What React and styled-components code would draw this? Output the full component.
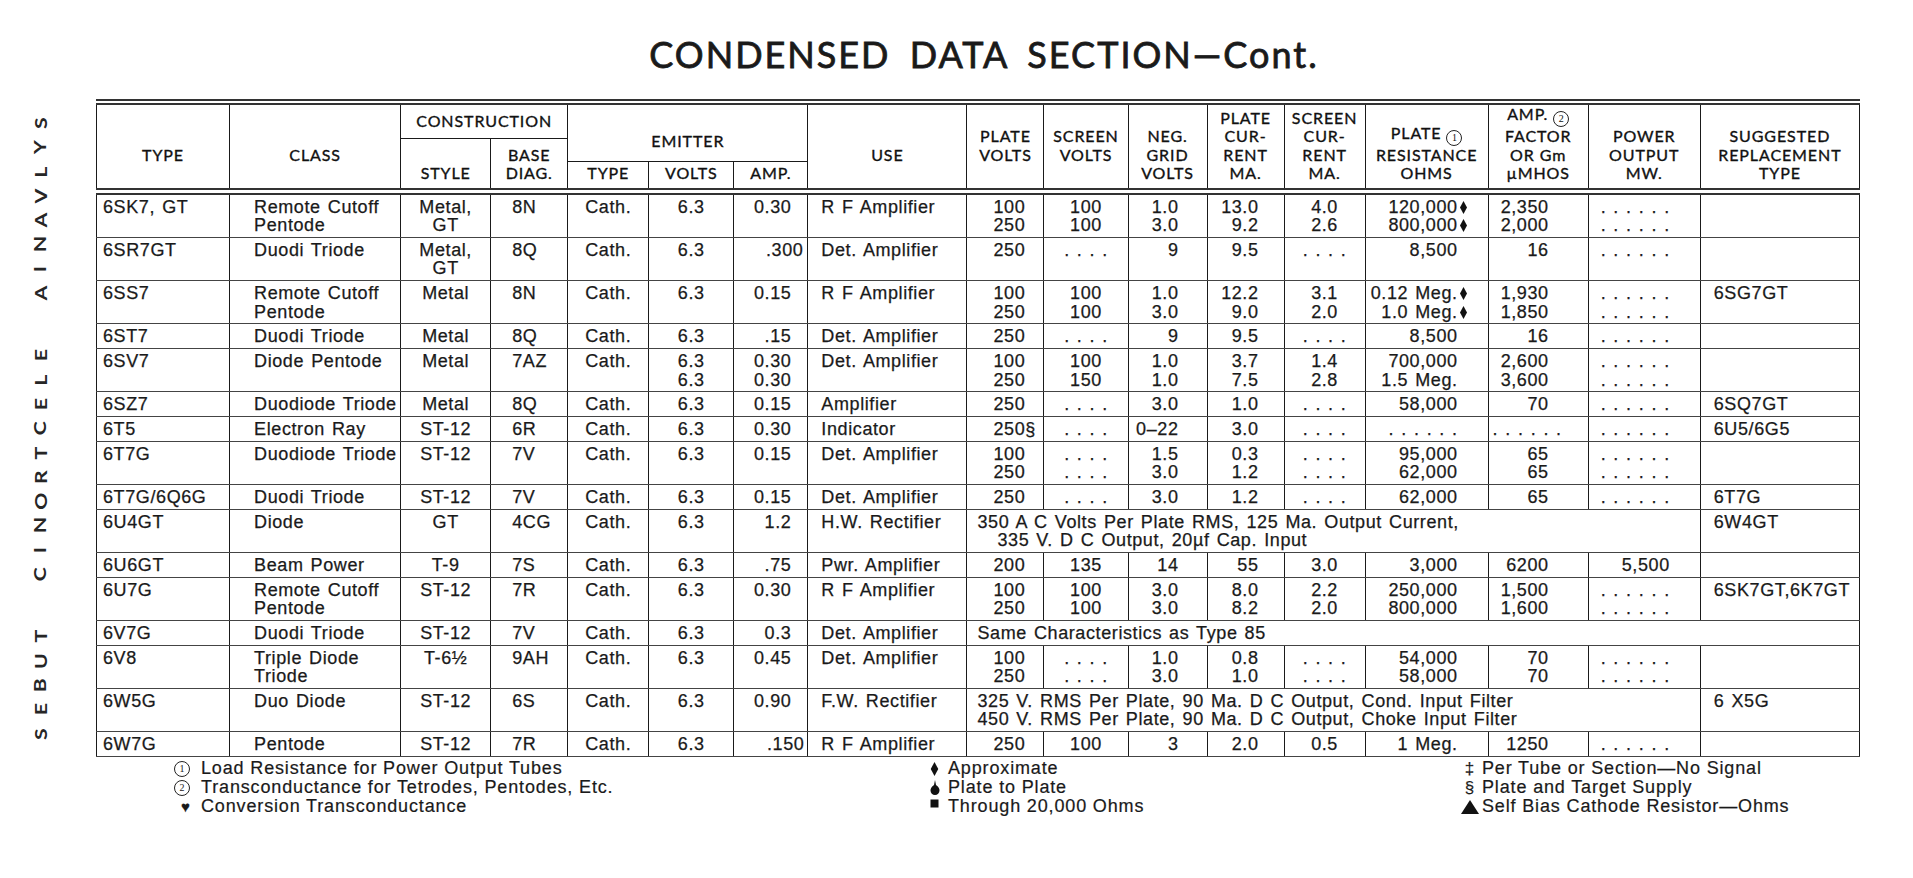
import React from "react";
import styled, { createGlobalStyle } from "styled-components";

const GlobalStyle = createGlobalStyle`
  html, body {
    margin: 0;
    padding: 0;
    background: #fff;
  }
  body {
    width: 1913px;
    height: 878px;
    overflow: hidden;
    color: #1a1a1a;
  }
`;

const INK = "#1a1a1a";
const D6 = ". . . . . .";
const D4 = ". . . .";

const COLS = [
  { w: 133, align: "left", pl: 6 },
  { w: 171, align: "left", pl: 24 },
  { w: 90, align: "center" },
  { w: 77, align: "left", pl: 21 },
  { w: 81, align: "center" },
  { w: 85, align: "center" },
  { w: 74, align: "right", pr: 16 },
  { w: 159, align: "left", pl: 13 },
  { w: 77, align: "left", pl: 26 },
  { w: 84, align: "center" },
  { w: 79, align: "right", pr: 28 },
  { w: 77, align: "right", pr: 25 },
  { w: 81, align: "center" },
  { w: 123, align: "right", pr: 30 },
  { w: 100, align: "right", pr: 39 },
  { w: 112, align: "right", pr: 30 },
  { w: 159, align: "left", pl: 13 },
];

// { text, pr } overrides the column's right padding for one cell
const ROWS = [
  ["6SK7, GT", "Remote Cutoff\nPentode", "Metal,\nGT", "8N", "Cath.", "6.3", "0.30", "R F Amplifier", "100\n250", "100\n100", "1.0\n3.0", "13.0\n9.2", "4.0\n2.6", "120,000♦\n800,000♦", "2,350\n2,000", `${D6}\n${D6}`, ""],
  ["6SR7GT", "Duodi Triode", "Metal,\nGT", "8Q", "Cath.", "6.3", { text: ".300", pr: 4 }, "Det. Amplifier", "250", D4, "9", "9.5", D4, "8,500", "16", D6, ""],
  ["6SS7", "Remote Cutoff\nPentode", "Metal", "8N", "Cath.", "6.3", "0.15", "R F Amplifier", "100\n250", "100\n100", "1.0\n3.0", "12.2\n9.0", "3.1\n2.0", "0.12 Meg.♦\n1.0 Meg.♦", "1,930\n1,850", `${D6}\n${D6}`, "6SG7GT"],
  ["6ST7", "Duodi Triode", "Metal", "8Q", "Cath.", "6.3", ".15", "Det. Amplifier", "250", D4, "9", "9.5", D4, "8,500", "16", D6, ""],
  ["6SV7", "Diode Pentode", "Metal", "7AZ", "Cath.", "6.3\n6.3", "0.30\n0.30", "Det. Amplifier", "100\n250", "100\n150", "1.0\n1.0", "3.7\n7.5", "1.4\n2.8", "700,000\n1.5 Meg.", "2,600\n3,600", `${D6}\n${D6}`, ""],
  ["6SZ7", "Duodiode Triode", "Metal", "8Q", "Cath.", "6.3", "0.15", "Amplifier", "250", D4, "3.0", "1.0", D4, "58,000", "70", D6, "6SQ7GT"],
  ["6T5", "Electron Ray", "ST-12", "6R", "Cath.", "6.3", "0.30", "Indicator", "250§", D4, "0–22", "3.0", D4, D6, { text: D6, pr: 26 }, D6, "6U5/6G5"],
  ["6T7G", "Duodiode Triode", "ST-12", "7V", "Cath.", "6.3", "0.15", "Det. Amplifier", "100\n250", `${D4}\n${D4}`, "1.5\n3.0", "0.3\n1.2", `${D4}\n${D4}`, "95,000\n62,000", "65\n65", `${D6}\n${D6}`, ""],
  ["6T7G/6Q6G", "Duodi Triode", "ST-12", "7V", "Cath.", "6.3", "0.15", "Det. Amplifier", "250", D4, "3.0", "1.2", D4, "62,000", "65", D6, "6T7G"],
  ["6U4GT", "Diode", "GT", "4CG", "Cath.", "6.3", "1.2", "H.W. Rectifier", { span: 8, lines: ["350 A C Volts Per Plate RMS, 125 Ma. Output Current,", "335 V. D C Output, 20µf Cap. Input"], indent: 20 }, "6W4GT"],
  ["6U6GT", "Beam Power", "T-9", "7S", "Cath.", "6.3", ".75", "Pwr. Amplifier", "200", "135", "14", "55", "3.0", "3,000", "6200", "5,500", ""],
  ["6U7G", "Remote Cutoff\nPentode", "ST-12", "7R", "Cath.", "6.3", "0.30", "R F Amplifier", "100\n250", "100\n100", "3.0\n3.0", "8.0\n8.2", "2.2\n2.0", "250,000\n800,000", "1,500\n1,600", `${D6}\n${D6}`, "6SK7GT,6K7GT"],
  ["6V7G", "Duodi Triode", "ST-12", "7V", "Cath.", "6.3", "0.3", "Det. Amplifier", { span: 9, lines: ["Same Characteristics as Type 85"] }],
  ["6V8", "Triple Diode\nTriode", "T-6½", "9AH", "Cath.", "6.3", "0.45", "Det. Amplifier", "100\n250", `${D4}\n${D4}`, "1.0\n3.0", "0.8\n1.0", `${D4}\n${D4}`, "54,000\n58,000", "70\n70", `${D6}\n${D6}`, ""],
  ["6W5G", "Duo Diode", "ST-12", "6S", "Cath.", "6.3", "0.90", "F.W. Rectifier", { span: 8, lines: ["325 V. RMS Per Plate, 90 Ma. D C Output, Cond. Input Filter", "450 V. RMS Per Plate, 90 Ma. D C Output, Choke Input Filter"] }, "6 X5G"],
  ["6W7G", "Pentode", "ST-12", "7R", "Cath.", "6.3", { text: ".150", pr: 3 }, "R F Amplifier", "250", "100", "3", "2.0", "0.5", "1 Meg.", "1250", D6, ""],
];

const BANNER = ["SYLVANIA", "ELECTRONIC", "TUBES"];

const Page = styled.div`
  display: flex;
  align-items: flex-start;
  width: 1913px;
  height: 878px;
`;

const Banner = styled.div`
  box-sizing: border-box;
  width: 96px;
  padding: 111px 14px 0 0;
  display: flex;
  flex-direction: column;
  align-items: center;
`;

const Word = styled.div`
  display: flex;
  flex-direction: column;
  align-items: center;
  & + & {
    margin-top: 38px;
  }
`;

const Letter = styled.span`
  display: block;
  height: 24.3px;
  line-height: 24.3px;
  font-family: Lato, "DejaVu Sans", sans-serif;
  font-weight: 700;
  font-size: 17px;
  color: #262626;
  transform: rotate(-90deg) scaleX(1.25);
`;

const Main = styled.div`
  display: flex;
  flex-direction: column;
`;

const Title = styled.h1`
  margin: 0;
  padding: 33px 0 24px 12px;
  text-align: center;
  font-family: Lato, "DejaVu Sans", sans-serif;
  font-weight: 400;
  font-size: 36px;
  line-height: 42px;
  letter-spacing: 2px;
  word-spacing: 8px;
  color: ${INK};
  -webkit-text-stroke: 0.8px ${INK};
`;

const Table = styled.table`
  border-collapse: collapse;
  table-layout: fixed;
  width: 1764px;
  border: 1px solid ${INK};
  border-top: 6px double #333;

  tbody tr:first-child td {
    border-top: 7px double #333;
  }
`;

const HeadRow = styled.tr`
  height: ${(p) => p.$h}px;
`;

const Th = styled.th`
  padding: 0 0 ${(p) => (p.$lift ? 23.5 : p.$pb ?? 5)}px;
  border: 1px solid ${INK};
  vertical-align: ${(p) => p.$valign || "bottom"};
  text-align: center;
  white-space: pre;
  font-family: Lato, "DejaVu Sans", sans-serif;
  font-weight: 400;
  font-size: 16px;
  line-height: 18.5px;
  letter-spacing: 0.9px;
  color: #111;
  -webkit-text-stroke: 0.35px #111;
`;

const Td = styled.td`
  padding: 3px ${(p) => p.$pr || 0}px 2px ${(p) => p.$pl || 0}px;
  border-left: 1px solid ${INK};
  border-right: 1px solid ${INK};
  border-bottom: 1px solid #444;
  vertical-align: top;
  text-align: ${(p) => p.$align};
  white-space: pre;
  font-family: "Liberation Sans", Arial, sans-serif;
  font-size: 18px;
  line-height: 18.5px;
  letter-spacing: 0.6px;
  word-spacing: 1.5px;
  color: ${INK};
  -webkit-text-stroke: 0.25px ${INK};
`;

const Line = styled.span`
  display: block;
  padding-left: ${(p) => p.$indent || 0}px;
`;

const LozengeSvg = styled.svg`
  width: 7px;
  height: 13px;
  margin: 0 -9px 0 2px;
  vertical-align: -1px;
`;

const Circled = styled.span`
  display: inline-flex;
  align-items: center;
  justify-content: center;
  box-sizing: border-box;
  width: 16px;
  height: 16px;
  border: 1px solid #222;
  border-radius: 50%;
  font-family: "Liberation Serif", serif;
  font-size: 10px;
  line-height: 1;
  letter-spacing: 0;
  vertical-align: -2px;
  -webkit-text-stroke: 0;
`;

const Footnotes = styled.div`
  display: grid;
  grid-template-columns: 756px 528px 1fr;
  padding-left: 78px;
  margin-top: 6px;
  font-family: "Liberation Sans", Arial, sans-serif;
  font-size: 18px;
  line-height: 19px;
  letter-spacing: 0.85px;
  color: ${INK};
  -webkit-text-stroke: 0.2px ${INK};
`;

const NoteCol = styled.div`
  display: flex;
  flex-direction: column;
`;

const Note = styled.div`
  display: flex;
  align-items: center;
  height: 19px;
`;

const Mark = styled.span`
  flex: none;
  display: flex;
  align-items: center;
  justify-content: ${(p) => p.$justify || "center"};
  width: ${(p) => p.$w}px;
  padding-left: ${(p) => p.$pl || 0}px;
  box-sizing: border-box;
  font-size: ${(p) => p.$fs || 17}px;
`;

function Lozenge() {
  return (
    <LozengeSvg viewBox="0 0 7 13">
      <polygon points="3.5,0 7,6.5 3.5,13 0,6.5" fill="#111" />
    </LozengeSvg>
  );
}

function Drop() {
  return (
    <svg width="10" height="15" viewBox="0 0 10 15">
      <path d="M5 0 L6 5 C9 7 9.5 9 9.5 10.5 C9.5 13 7.5 15 5 15 C2.5 15 0.5 13 0.5 10.5 C0.5 9 1 7 4 5 Z" fill="#111" />
    </svg>
  );
}

function Square() {
  return (
    <svg width="9" height="9" viewBox="0 0 9 9" style={{ marginTop: -6 }}>
      <rect x="0.5" y="0.5" width="8" height="8" fill="#111" />
    </svg>
  );
}

function Triangle() {
  return (
    <svg width="18" height="14" viewBox="0 0 18 14">
      <polygon points="9,0 18,14 0,14" fill="#111" />
    </svg>
  );
}

function withLozenges(text) {
  const parts = text.split("♦");
  return parts.map((part, i) => (
    <React.Fragment key={i}>
      {part}
      {i < parts.length - 1 && <Lozenge />}
    </React.Fragment>
  ));
}

function BodyRow({ row }) {
  let col = 0;
  return (
    <tr>
      {row.map((cell, i) => {
        const c = COLS[col];
        if (cell && cell.span) {
          col += cell.span;
          return (
            <Td key={i} colSpan={cell.span} $align="left" $pl={10}>
              {cell.lines.map((l, j) => (
                <Line key={j} $indent={j > 0 ? cell.indent : 0}>
                  {l}
                </Line>
              ))}
            </Td>
          );
        }
        col += 1;
        if (cell && cell.text) {
          return (
            <Td key={i} $align={c.align} $pl={c.pl} $pr={cell.pr}>
              {cell.text}
            </Td>
          );
        }
        return (
          <Td key={i} $align={c.align} $pl={c.pl} $pr={c.pr}>
            {withLozenges(cell)}
          </Td>
        );
      })}
    </tr>
  );
}

export default function App() {
  return (
    <>
      <GlobalStyle />
      <Page>
        <Banner>
          {BANNER.map((w) => (
            <Word key={w}>
              {w.split("").map((ch, i) => (
                <Letter key={i}>{ch}</Letter>
              ))}
            </Word>
          ))}
        </Banner>

        <Main>
          <Title>CONDENSED DATA SECTION—Cont.</Title>

          <Table>
            <colgroup>
              {COLS.map((c, i) => (
                <col key={i} style={{ width: c.w }} />
              ))}
            </colgroup>
            <thead>
              <HeadRow $h={36}>
                <Th rowSpan={3} $lift>TYPE</Th>
                <Th rowSpan={3} $lift>CLASS</Th>
                <Th colSpan={2} $valign="middle" $pb={0}>CONSTRUCTION</Th>
                <Th colSpan={3} rowSpan={2} $pb={10}>EMITTER</Th>
                <Th rowSpan={3} $lift>USE</Th>
                <Th rowSpan={3} $lift>{"PLATE\nVOLTS"}</Th>
                <Th rowSpan={3} $lift>{"SCREEN\nVOLTS"}</Th>
                <Th rowSpan={3}>{"NEG.\nGRID\nVOLTS"}</Th>
                <Th rowSpan={3}>{"PLATE\nCUR-\nRENT\nMA."}</Th>
                <Th rowSpan={3}>{"SCREEN\nCUR-\nRENT\nMA."}</Th>
                <Th rowSpan={3}>
                  PLATE <Circled>1</Circled>
                  {"\nRESISTANCE\nOHMS"}
                </Th>
                <Th rowSpan={3}>
                  AMP. <Circled>2</Circled>
                  {"\nFACTOR\nOR Gm\nµMHOS"}
                </Th>
                <Th rowSpan={3}>{"POWER\nOUTPUT\nMW."}</Th>
                <Th rowSpan={3}>{"SUGGESTED\nREPLACEMENT\nTYPE"}</Th>
              </HeadRow>
              <HeadRow $h={19}>
                <Th rowSpan={2}>STYLE</Th>
                <Th rowSpan={2}>{"BASE\nDIAG."}</Th>
              </HeadRow>
              <HeadRow $h={30}>
                <Th>TYPE</Th>
                <Th>VOLTS</Th>
                <Th>AMP.</Th>
              </HeadRow>
            </thead>
            <tbody>
              {ROWS.map((row) => (
                <BodyRow key={row[0]} row={row} />
              ))}
            </tbody>
          </Table>

          <Footnotes>
            <NoteCol>
              <Note>
                <Mark $w={27} $justify="flex-start"><Circled>1</Circled></Mark>
                Load Resistance for Power Output Tubes
              </Note>
              <Note>
                <Mark $w={27} $justify="flex-start"><Circled>2</Circled></Mark>
                Transconductance for Tetrodes, Pentodes, Etc.
              </Note>
              <Note>
                <Mark $w={27} $justify="flex-start" $pl={7} $fs={15}>♥</Mark>
                Conversion Transconductance
              </Note>
            </NoteCol>
            <NoteCol>
              <Note>
                <Mark $w={18} $justify="flex-start">
                  <svg width="9" height="14" viewBox="0 0 7 13">
                    <polygon points="3.5,0 7,6.5 3.5,13 0,6.5" fill="#111" />
                  </svg>
                </Mark>
                Approximate
              </Note>
              <Note>
                <Mark $w={18} $justify="flex-start"><Drop /></Mark>
                Plate to Plate
              </Note>
              <Note>
                <Mark $w={18} $justify="flex-start"><Square /></Mark>
                Through 20,000 Ohms
              </Note>
            </NoteCol>
            <NoteCol>
              <Note>
                <Mark $w={24}>‡</Mark>
                Per Tube or Section—No Signal
              </Note>
              <Note>
                <Mark $w={24}>§</Mark>
                Plate and Target Supply
              </Note>
              <Note>
                <Mark $w={24}><Triangle /></Mark>
                Self Bias Cathode Resistor—Ohms
              </Note>
            </NoteCol>
          </Footnotes>
        </Main>
      </Page>
    </>
  );
}
